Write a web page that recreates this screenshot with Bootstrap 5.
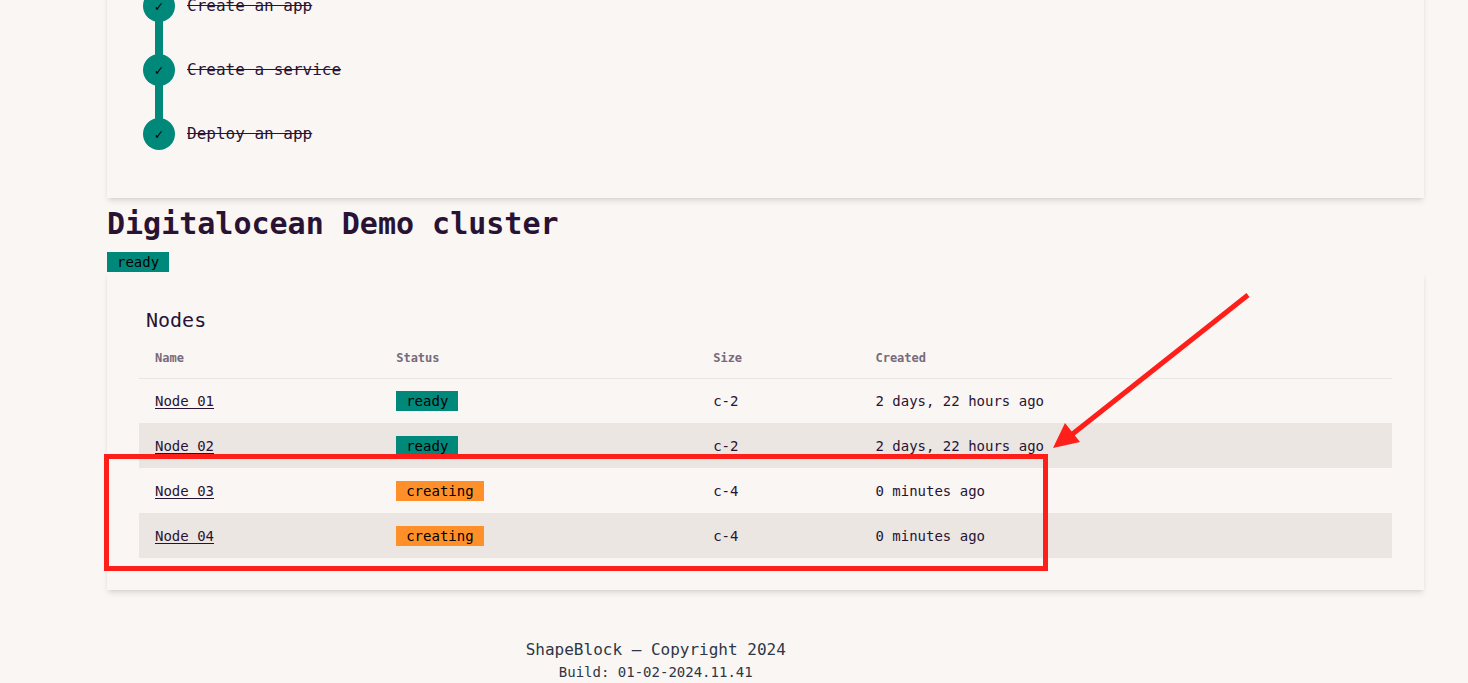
<!DOCTYPE html>
<html lang="en">
<head>
<meta charset="utf-8">
<meta name="viewport" content="width=device-width, initial-scale=1">
<title>ShapeBlock</title>
<link href="https://cdn.jsdelivr.net/npm/bootstrap@5.3.0/dist/css/bootstrap.min.css" rel="stylesheet">
<style>
  body { font-family: "DejaVu Sans Mono", monospace; font-size: 16px; line-height: 24px; color: #291334; background: #faf6f3; }
  .page-main { padding-left: 107px; padding-right: 44px; }
  .panel { background: #faf6f3; box-shadow: 0 4px 6px -1px rgba(0,0,0,.1), 0 2px 4px -2px rgba(0,0,0,.1); padding: 0 32px 32px; }
  .panel-nodes { padding-top: 32px; }
  .step-list { margin-top: -26px; }
  .step-item { height: 64px; }
  .step-rail { width: 40px; height: 64px; background: linear-gradient(#00897b, #00897b) center / 8px 100% no-repeat; }
  .step-item:last-child .step-rail { background-size: 8px 50%; background-position: top; }
  .step-dot { width: 32px; height: 32px; font-size: 14px; font-weight: 700; background: #00897b; color: #000; }
  .cluster-title { font-size: 30px; line-height: 36px; padding-top: 8px; margin-bottom: 10px; }
  .status { display: inline-block; font-size: 14px; line-height: 20px; padding: 0 10px; color: #000; vertical-align: top; }
  .status-ready { background: #00897b; }
  .status-creating { background: #ff9029; }
  .nodes-title { font-size: 20px; line-height: 32px; padding-left: 7px; }
  .nodes-table { width: 100%; font-size: 14px; line-height: 20px; border-collapse: separate; border-spacing: 0; table-layout: fixed; }
  .nodes-table th { height: 42px; padding: 2px 16px 0; font-size: 12px; color: #766a7b; }
  .nodes-table td { height: 45px; padding: 0 16px; vertical-align: middle; }
  .nodes-table tbody tr:first-child td { border-top: 1px solid #ebe6e2; }
  .nodes-table tbody tr:nth-child(even) { background: #ebe6e2; }
  .nodes-table a { color: inherit; text-underline-offset: 2px; }
  .col-name { width: 19.25%; }
  .col-status { width: 25.3%; }
  .col-size { width: 12.95%; }
  .highlight { left: -3px; top: 182px; width: 944px; height: 117px; border: 5px solid #ff1f1a; pointer-events: none; }
  .arrow { left: 943px; top: 18px; pointer-events: none; }
  .page-foot { color: #2d3748; padding-top: 48px; }
  .build { font-size: 14px; line-height: 20px; }
</style>
</head>
<body>
<main class="page-main">
  <section class="panel">
    <ul class="step-list list-unstyled mb-0">
      <li class="step-item d-flex align-items-center gap-2">
        <span class="step-rail d-flex align-items-center justify-content-center"><span class="step-dot rounded-circle d-flex align-items-center justify-content-center">✓</span></span>
        <s>Create an app</s>
      </li>
      <li class="step-item d-flex align-items-center gap-2">
        <span class="step-rail d-flex align-items-center justify-content-center"><span class="step-dot rounded-circle d-flex align-items-center justify-content-center">✓</span></span>
        <s>Create a service</s>
      </li>
      <li class="step-item d-flex align-items-center gap-2">
        <span class="step-rail d-flex align-items-center justify-content-center"><span class="step-dot rounded-circle d-flex align-items-center justify-content-center">✓</span></span>
        <s>Deploy an app</s>
      </li>
    </ul>
  </section>

  <h1 class="cluster-title fw-bold">Digitalocean Demo cluster</h1>
  <div class="d-flex"><span class="status status-ready">ready</span></div>

  <section class="panel panel-nodes position-relative">
    <h2 class="nodes-title fw-normal mb-0">Nodes</h2>
    <table class="nodes-table">
      <thead>
        <tr><th class="col-name">Name</th><th class="col-status">Status</th><th class="col-size">Size</th><th>Created</th></tr>
      </thead>
      <tbody>
        <tr><td><a href="#">Node 01</a></td><td><span class="status status-ready">ready</span></td><td>c-2</td><td>2 days, 22 hours ago</td></tr>
        <tr><td><a href="#">Node 02</a></td><td><span class="status status-ready">ready</span></td><td>c-2</td><td>2 days, 22 hours ago</td></tr>
        <tr><td><a href="#">Node 03</a></td><td><span class="status status-creating">creating</span></td><td>c-4</td><td>0 minutes ago</td></tr>
        <tr><td><a href="#">Node 04</a></td><td><span class="status status-creating">creating</span></td><td>c-4</td><td>0 minutes ago</td></tr>
      </tbody>
    </table>
    <div class="highlight position-absolute"></div>
    <svg class="arrow position-absolute" width="204" height="164" viewBox="0 0 204 164" aria-hidden="true">
      <path d="M198 5L20 146" stroke="#ff1f1a" stroke-width="5" fill="none"/>
      <path d="M3 158L15 133L30 152Z" fill="#ff1f1a"/>
    </svg>
  </section>

  <footer class="page-foot row g-0">
    <div class="col-10 text-center">
      <div>ShapeBlock — Copyright 2024</div>
      <div class="build">Build: 01-02-2024.11.41</div>
    </div>
  </footer>
</main>
<script src="https://cdn.jsdelivr.net/npm/bootstrap@5.3.0/dist/js/bootstrap.bundle.min.js"></script>
</body>
</html>
